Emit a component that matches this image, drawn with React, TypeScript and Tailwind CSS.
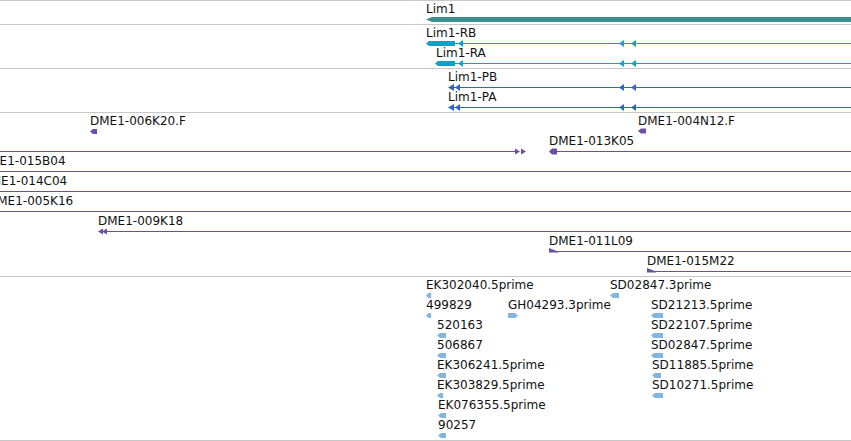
import React from "react";

// colours of the feature glyphs
const GENE = "#3c8d8f";
const MRNA = "#12a0c6";
const PROT = "#2f63d0";
const BAC = "#6b4fa6";
const EST = "#80b6df";

// glyph line of row i inside a track
const row = (i: number) => 18 + i * 20;

type Lbl = [string, number, number]; // text, x, row

function Labels({ items }: { items: Lbl[] }) {
  return (
    <>
      {items.map(([t, x, r]) => (
        <span
          key={t + r}
          className="absolute whitespace-nowrap text-[12px] leading-[14px] text-[#111]"
          style={{ left: x, top: row(r) - 17 }}
        >
          {t}
        </span>
      ))}
    </>
  );
}

const flagL = (x: number, w: number, y: number, h = 5) => {
  const c = y + 0.5;
  const t = Math.min(3, w / 2);
  return `${x},${c} ${x + t},${c - h / 2} ${x + w},${c - h / 2} ${x + w},${c + h / 2} ${x + t},${c + h / 2}`;
};

const flagR = (x: number, w: number, y: number, h = 5) => {
  const c = y + 0.5;
  return `${x},${c - h / 2} ${x + w - 3},${c - h / 2} ${x + w},${c} ${x + w - 3},${c + h / 2} ${x},${c + h / 2}`;
};

const triL = (x: number, y: number, w = 5, h = 7) => {
  const c = y + 0.5;
  return `${x},${c} ${x + w},${c - h / 2} ${x + w},${c + h / 2}`;
};

const triR = (x: number, y: number, w = 5, h = 6) => {
  const c = y + 0.5;
  return `${x},${c - h / 2} ${x + w},${c} ${x},${c + h / 2}`;
};

// start-of-feature flag pointing right (clone start)
const startR = (x: number, y: number) =>
  `${x},${y - 3} ${x + 9},${y + 0.5} ${x + 9},${y + 1.5} ${x},${y + 1.5}`;

function HLine({ x1, x2, y, color }: { x1: number; x2: number; y: number; color: string }) {
  return <rect x={x1} y={y} width={x2 - x1} height={1} fill={color} />;
}

function Track({
  h,
  first,
  children,
}: {
  h: string;
  first?: boolean;
  children: React.ReactNode;
}) {
  return (
    <div
      className={`relative shrink-0 overflow-hidden border-b border-[#c8c8c8] ${h} ${
        first ? "border-t" : ""
      }`}
    >
      {children}
    </div>
  );
}

function Canvas({ height, children }: { height: number; children: React.ReactNode }) {
  return (
    <svg
      className="absolute left-0 top-0"
      width={851}
      height={height}
      viewBox={`0 0 851 ${height}`}
    >
      {children}
    </svg>
  );
}

const estRows: { label: string; x: number; r: number; w: number; dir?: "r" }[] = [
  { label: "EK302040.5prime", x: 426, r: 0, w: 5 },
  { label: "SD02847.3prime", x: 610, r: 0, w: 9 },
  { label: "499829", x: 426, r: 1, w: 5 },
  { label: "GH04293.3prime", x: 508, r: 1, w: 10, dir: "r" },
  { label: "SD21213.5prime", x: 651, r: 1, w: 12 },
  { label: "520163", x: 437, r: 2, w: 9 },
  { label: "SD22107.5prime", x: 651, r: 2, w: 12 },
  { label: "506867", x: 437, r: 3, w: 9 },
  { label: "SD02847.5prime", x: 651, r: 3, w: 12 },
  { label: "EK306241.5prime", x: 437, r: 4, w: 9 },
  { label: "SD11885.5prime", x: 652, r: 4, w: 9 },
  { label: "EK303829.5prime", x: 437, r: 5, w: 6 },
  { label: "SD10271.5prime", x: 652, r: 5, w: 11 },
  { label: "EK076355.5prime", x: 438, r: 6, w: 8 },
  { label: "90257", x: 438, r: 7, w: 8 },
];

export default function App() {
  return (
    <div className="flex h-[441px] w-[851px] flex-col overflow-hidden bg-white font-['DejaVu_Sans',sans-serif]">
      {/* gene */}
      <Track h="h-[25px]" first>
        <Canvas height={23}>
          <polygon points={`426,18.5 432,16 851,16 851,21 432,21`} fill={GENE} />
        </Canvas>
        <Labels items={[["Lim1", 426, 0]]} />
      </Track>

      {/* transcripts */}
      <Track h="h-[44px]">
        <Canvas height={43}>
          {[
            { y: row(0), x: 426 },
            { y: row(1), x: 435 },
          ].map(({ y, x }) => (
            <g key={y} fill={MRNA}>
              <HLine x1={455} x2={851} y={y} color={MRNA} />
              <polygon points={flagL(x, 455 - x, y, 5)} />
              <polygon points={triL(458, y)} />
              <polygon points={triL(619, y)} />
              <polygon points={triL(631, y)} />
            </g>
          ))}
        </Canvas>
        <Labels
          items={[
            ["Lim1-RB", 426, 0],
            ["Lim1-RA", 436, 1],
          ]}
        />
      </Track>

      {/* proteins */}
      <Track h="h-[44px]">
        <Canvas height={43}>
          {[row(0), row(1)].map((y) => (
            <g key={y} fill={PROT}>
              <HLine x1={450} x2={851} y={y} color={PROT} />
              <polygon points={triL(448, y, 6)} />
              <polygon points={triL(455, y)} />
              <polygon points={triL(619, y)} />
              <polygon points={triL(631, y)} />
            </g>
          ))}
        </Canvas>
        <Labels
          items={[
            ["Lim1-PB", 448, 0],
            ["Lim1-PA", 448, 1],
          ]}
        />
      </Track>

      {/* BAC clones */}
      <Track h="h-[164px]">
        <Canvas height={163}>
          <g fill={BAC}>
            <polygon points={flagL(90, 7, row(0), 5)} />
            <polygon points={flagL(638, 8, row(0) - 0.5, 5)} />

            <HLine x1={0} x2={518} y={row(1)} color={BAC} />
            <polygon points={triR(515, row(1))} />
            <polygon points={triR(521, row(1))} />
            <HLine x1={555} x2={851} y={row(1)} color={BAC} />
            <polygon points={flagL(549, 8, row(1), 6)} />

            <HLine x1={0} x2={851} y={row(2)} color={BAC} />
            <HLine x1={0} x2={851} y={row(3)} color={BAC} />
            <HLine x1={0} x2={851} y={row(4)} color={BAC} />

            <HLine x1={100} x2={851} y={row(5)} color={BAC} />
            <polygon points={triL(98, row(5), 5, 6)} />
            <polygon points={triL(102, row(5), 5, 6)} />

            <HLine x1={549} x2={851} y={row(6)} color={BAC} />
            <polygon points={startR(549, row(6))} />

            <HLine x1={647} x2={851} y={row(7)} color={BAC} />
            <polygon points={startR(647, row(7))} />
          </g>
        </Canvas>
        <Labels
          items={[
            ["DME1-006K20.F", 90, 0],
            ["DME1-004N12.F", 638, 0],
            ["DME1-013K05", 549, 1],
            ["DME1-015B04", -20, 2],
            ["DME1-014C04", -18.5, 3],
            ["DME1-005K16", -12, 4],
            ["DME1-009K18", 98, 5],
            ["DME1-011L09", 549, 6],
            ["DME1-015M22", 647, 7],
          ]}
        />
      </Track>

      {/* ESTs */}
      <Track h="h-[164px]">
        <Canvas height={163}>
          <g fill={EST}>
            {estRows.map((e) => (
              <polygon
                key={e.label}
                points={e.dir === "r" ? flagR(e.x, e.w, row(e.r)) : flagL(e.x, e.w, row(e.r))}
              />
            ))}
          </g>
        </Canvas>
        <Labels items={estRows.map((e) => [e.label, e.x, e.r] as Lbl)} />
      </Track>
    </div>
  );
}
